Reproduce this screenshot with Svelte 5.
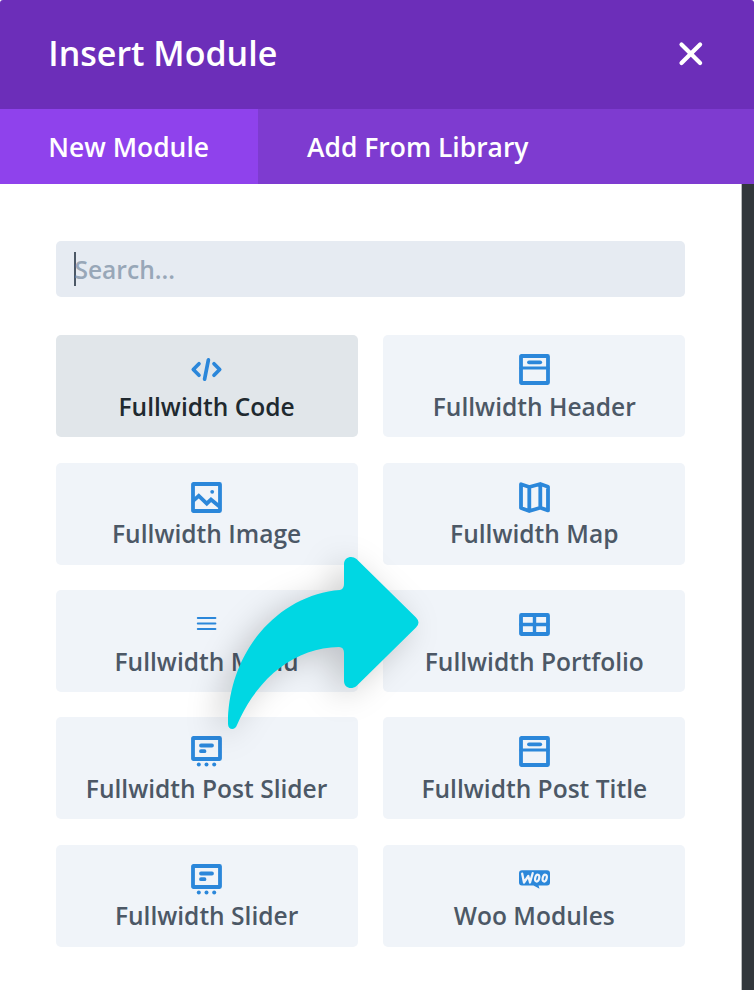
<script>
  const modules = [
    { name: 'Fullwidth Code', icon: 'code', active: true },
    { name: 'Fullwidth Header', icon: 'header' },
    { name: 'Fullwidth Image', icon: 'image' },
    { name: 'Fullwidth Map', icon: 'map' },
    { name: 'Fullwidth Menu', icon: 'menu' },
    { name: 'Fullwidth Portfolio', icon: 'portfolio' },
    { name: 'Fullwidth Post Slider', icon: 'slider' },
    { name: 'Fullwidth Post Title', icon: 'header' },
    { name: 'Fullwidth Slider', icon: 'slider' },
    { name: 'Woo Modules', icon: 'woo' }
  ];
</script>

<div class="modal">
  <header>
    <h1>Insert Module</h1>
    <button class="close" aria-label="Close">
      <svg width="26" height="26" viewBox="0 0 26 26"><path d="M3.5 3.5l18.600 18.600M22.100 3.500l-18.600 18.600" stroke="#fff" stroke-width="4.2" stroke-linecap="round" /></svg>
    </button>
  </header>
  <nav>
    <div class="tab current"><span>New Module</span></div>
    <div class="tab"><span>Add From Library</span></div>
  </nav>
  <div class="body">
    <main>
      <div class="search"><i class="caret"></i><span>Search...</span></div>
      <div class="grid">
        {#each modules as m}
          <div class="card" class:active={m.active}>
            <svg class="icon" width="31" height="31" viewBox="0 0 31 31" fill="none" stroke="#2b87da" stroke-width="3.8" stroke-linecap="round" stroke-linejoin="round">
              {#if m.icon === 'code'}
                <path d="M8 9.8L2.3 15.5 8 21.2M23 9.8l5.7 5.7-5.7 5.7M17.4 5.800l-3.800 19.300" stroke-width="3.7" />
              {:else if m.icon === 'header'}
                <rect x="2" y="2" width="27" height="27" rx=".4" />
                <path d="M2 14h27" stroke-width="3.2" /><path d="M10 8.3h11.2" />
              {:else if m.icon === 'image'}
                <rect x="2" y="2" width="27" height="27" rx=".4" />
                <path d="M3 18.2l4.8-4.4 8 7.7 4.2-4 7.5 6.2" stroke-linejoin="miter" />
                <circle cx="21.2" cy="9.8" r="1.9" fill="#2b87da" stroke="none" />
              {:else if m.icon === 'map'}
                <path d="M2 2.2L10.3 5l11-3L29 4.7v23.7l-7.7-2.6-11 3.2L2 26zM10.3 5v23M21.3 2.5v23" stroke-width="3.8" />
              {:else if m.icon === 'menu'}
                <path d="M6.8 8.900h17.600M6.800 14.500h17.600M6.800 20.100h17.600" stroke-width="2" />
              {:else if m.icon === 'portfolio'}
                <rect x="2" y="6" width="27" height="19" rx=".4" />
                <path d="M15.5 6v19M2 15.5h27" stroke-width="3.4" />
              {:else if m.icon === 'slider'}
                <rect x="2" y="2" width="27" height="21" rx=".4" />
                <path d="M10 9.5h11M10 15.2h3.5" />
                <g fill="#2b87da" stroke="none"><circle cx="7.8" cy="28.4" r="2" /><circle cx="15.5" cy="28.4" r="2" /><circle cx="23.2" cy="28.4" r="2" /></g>
              {:else}
                <path d="M3 6.3h25q3 0 3 3v9.2q0 3-3 3h-8.500l1 3.300-6-3.300H3q-3 0-3-3V9.300q0-3 3-3z" fill="#2b87da" stroke="none" />
                <path d="M3.200 9.700l1.800 8.800 4.300-6.500 1.700 6.500 2.700-9.300" stroke="#f0f4fa" stroke-width="2.3" />
                <ellipse cx="18.200" cy="14.100" rx="2" ry="3.500" transform="rotate(14 18.2 14.1)" stroke="#f0f4fa" stroke-width="2.2" />
                <ellipse cx="25.700" cy="14.100" rx="2" ry="3.500" transform="rotate(14 25.7 14.1)" stroke="#f0f4fa" stroke-width="2.2" />
              {/if}
            </svg>
            <span class="name">{m.name}</span>
          </div>
        {/each}
      </div>
    </main>
    <aside></aside>
  </div>
  <svg class="arrow" width="240" height="240" viewBox="0 0 240 240">
    <path d="M140 50q4-1 4-6V24c0-7 8-9 12.500-5L216 77.500q5 5 0 10L156.500 146c-5 4-12.500 2-12.500-5v-28q0-6-5-6C96 108 59 135 37 185c-2 6-9 5-9-1 0-71 49-129 112-134z" fill="#00d7e3" />
  </svg>
</div>

<style>
  :global(body) { margin: 0; background: #fff; }
  .modal { position: relative; width: 754px; height: 992px; overflow: hidden; background: #fff; font-family: "Open Sans", sans-serif; font-weight: 600; box-sizing: border-box; display: flex; flex-direction: column; border-radius: 3px 3px 0 0; }
  header { height: 108.500px; flex: none; background: #6c2eb9; display: flex; align-items: center; justify-content: space-between; padding: 0 50px 1px 48.300px; box-sizing: border-box; color: #fff; }
  h1 { margin: 0; padding-bottom: 1.500px; font-size: 34px; font-weight: 600; line-height: 46px; white-space: nowrap; }
  .close { border: 0; padding: 0; background: none; width: 26px; height: 26px; }
  .close svg { display: block; }
  nav { height: 75.500px; flex: none; display: flex; background: #7e3bd0; color: #fff; font-size: 26.450px; }
  .tab { display: flex; align-items: center; padding: 1px 49px 0; box-sizing: border-box; white-space: nowrap; }
  .current { width: 258px; background: #8f42ec; padding-left: 48.300px; }
  .body { display: flex; height: 806px; flex: none; }
  main { width: 742px; box-sizing: border-box; padding: 57px 57px 0 55.600px; }
  aside { width: 12px; background: #32373c; box-shadow: -1px 0 #b8babc; }
  .search { height: 56.300px; background: #e6ebf2; border-radius: 5px; display: flex; align-items: center; padding-left: 18.800px; box-sizing: border-box; color: #98a7b8; font-size: 24.600px; }
  .caret { width: 2px; height: 34px; background: #4c5866; margin-right: -2px; }
  .grid { display: grid; grid-template-columns: 302px 302px; grid-auto-rows: 102px; gap: 25.380px 25.700px; margin-top: 38px; }
  .card { display: flex; flex-direction: column; align-items: center; background: #f0f4f9; border-radius: 5px; padding-top: 18.900px; box-sizing: border-box; color: #4c5866; }
  .active { background: #e1e6ea; color: #20292f; }
  .icon { display: block; flex: none; overflow: visible; }
  .name { font-size: 24.550px; line-height: 34px; margin-top: 4.600px; white-space: nowrap; }
  .arrow { position: absolute; left: 200px; top: 540px; overflow: visible; filter: drop-shadow(-9px 6px 16px rgba(0, 0, 0, .2)); }
</style>
